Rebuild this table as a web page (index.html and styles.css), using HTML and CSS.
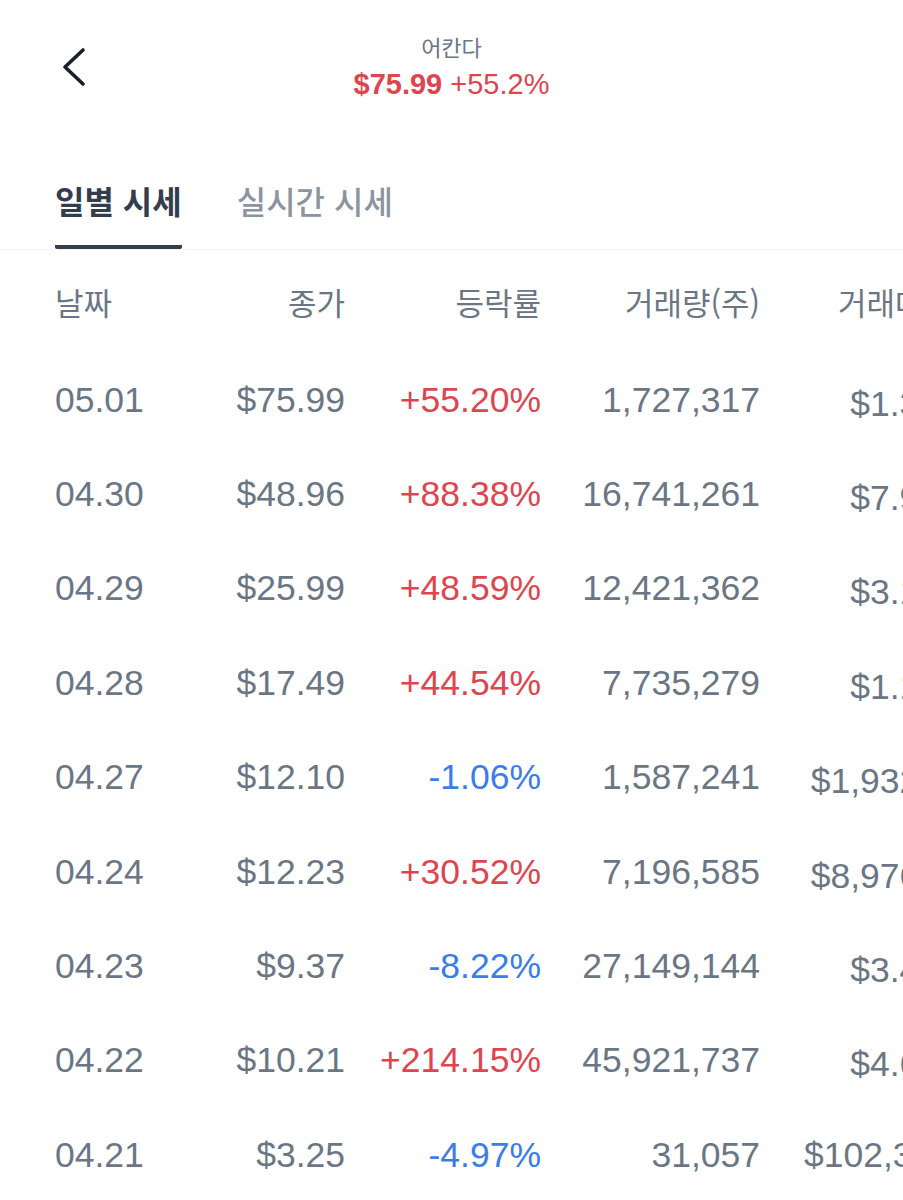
FILE: index.html
```html
<!DOCTYPE html>
<html lang="ko">
<head>
  <meta charset="UTF-8">
  <meta name="viewport" content="width=device-width, initial-scale=1.0">
  <title>어칸다 - 시세</title>
  <link rel="stylesheet" href="styles.css">
</head>
<body>
  <!-- Top bar -->
  <div class="topbar">
    <button class="back-button" aria-label="뒤로">
      <svg width="30" height="42" viewBox="0 0 30 42">
        <path d="M24 4 L6 21 L24 38" fill="none" stroke="#191f28" stroke-width="3.6" stroke-linecap="round" stroke-linejoin="round"/>
      </svg>
    </button>
    <div class="title">
      <div class="stock-name">어칸다</div>
      <div class="stock-price"><b>$75.99</b> +55.2%</div>
    </div>
  </div>

  <!-- Tabs -->
  <div class="tabs">
    <div class="tab active">일별 시세</div>
    <div class="tab">실시간 시세</div>
  </div>

  <div class="table-wrap">
    <div class="row head">
      <div class="cell date">날짜</div>
      <div class="cell">종가</div>
      <div class="cell">등락률</div>
      <div class="cell">거래량(주)</div>
      <div class="cell">거래대금</div>
    </div>

    <div class="row">
      <div class="cell date">05.01</div>
      <div class="cell">$75.99</div>
      <div class="cell up">+55.20%</div>
      <div class="cell">1,727,317</div>
      <div class="cell">$1.3억</div>
    </div>
    <div class="row">
      <div class="cell date">04.30</div>
      <div class="cell">$48.96</div>
      <div class="cell up">+88.38%</div>
      <div class="cell">16,741,261</div>
      <div class="cell">$7.9억</div>
    </div>
    <div class="row">
      <div class="cell date">04.29</div>
      <div class="cell">$25.99</div>
      <div class="cell up">+48.59%</div>
      <div class="cell">12,421,362</div>
      <div class="cell">$3.1억</div>
    </div>
    <div class="row">
      <div class="cell date">04.28</div>
      <div class="cell">$17.49</div>
      <div class="cell up">+44.54%</div>
      <div class="cell">7,735,279</div>
      <div class="cell">$1.1억</div>
    </div>
    <div class="row">
      <div class="cell date">04.27</div>
      <div class="cell">$12.10</div>
      <div class="cell down">-1.06%</div>
      <div class="cell">1,587,241</div>
      <div class="cell">$1,932만</div>
    </div>
    <div class="row">
      <div class="cell date">04.24</div>
      <div class="cell">$12.23</div>
      <div class="cell up">+30.52%</div>
      <div class="cell">7,196,585</div>
      <div class="cell">$8,976만</div>
    </div>
    <div class="row">
      <div class="cell date">04.23</div>
      <div class="cell">$9.37</div>
      <div class="cell down">-8.22%</div>
      <div class="cell">27,149,144</div>
      <div class="cell">$3.4억</div>
    </div>
    <div class="row">
      <div class="cell date">04.22</div>
      <div class="cell">$10.21</div>
      <div class="cell up">+214.15%</div>
      <div class="cell">45,921,737</div>
      <div class="cell">$4.6억</div>
    </div>
    <div class="row">
      <div class="cell date">04.21</div>
      <div class="cell">$3.25</div>
      <div class="cell down">-4.97%</div>
      <div class="cell">31,057</div>
      <div class="cell">$102,316</div>
    </div>
  </div>
</body>
</html>
```

FILE: styles.css
```css
body {
  font-family: "Liberation Sans", "Noto Sans CJK KR", sans-serif;
  background-color: #fff;
  color: #6b7684;
  margin: 0;
  padding: 0;
  overflow: hidden;
}

/* Top bar */
.topbar {
  position: relative;
  height: 130px;
}

.back-button {
  position: absolute;
  left: 59px;
  top: 46px;
  padding: 0;
  border: none;
  background: none;
  cursor: pointer;
}

.back-button svg {
  display: block;
}

.title {
  padding-top: 30px;
  text-align: center;
}

.stock-name {
  font-family: "Noto Sans CJK KR", sans-serif;
  font-size: 22px;
  line-height: 32px;
  color: #6b7684;
}

.stock-price {
  font-size: 29px;
  line-height: 44px;
  color: #de454f;
}

/* Tabs */
.tabs {
  display: flex;
  gap: 55px;
  padding: 50px 55px 0;
  border-bottom: 1px solid #f2f3f5;
}

.tab {
  font-family: "Noto Sans CJK KR", sans-serif;
  font-size: 32px;
  font-weight: 500;
  line-height: 40px;
  padding-bottom: 25px;
  border-bottom: 4px solid transparent;
  color: #8b95a1;
}

.tab.active {
  font-weight: 700;
  color: #333d4b;
  border-bottom-color: #333d4b;
  border-radius: 0 0 2px 2px;
}

/* Table */
.table-wrap {
  width: 1000px;
}

.row {
  display: grid;
  grid-template-columns: 150px 140px 196px 219px 192px;
  align-items: center;
  padding-left: 55px;
  height: 94.4px;
  font-size: 35.5px;
}

.row.head {
  height: 103px;
  font-family: "Noto Sans CJK KR", sans-serif;
  font-size: 31px;
}

.cell {
  text-align: right;
  white-space: nowrap;
}

.cell.date {
  text-align: left;
}

.up {
  color: #de454f;
}

.down {
  color: #3b7de8;
}
```
